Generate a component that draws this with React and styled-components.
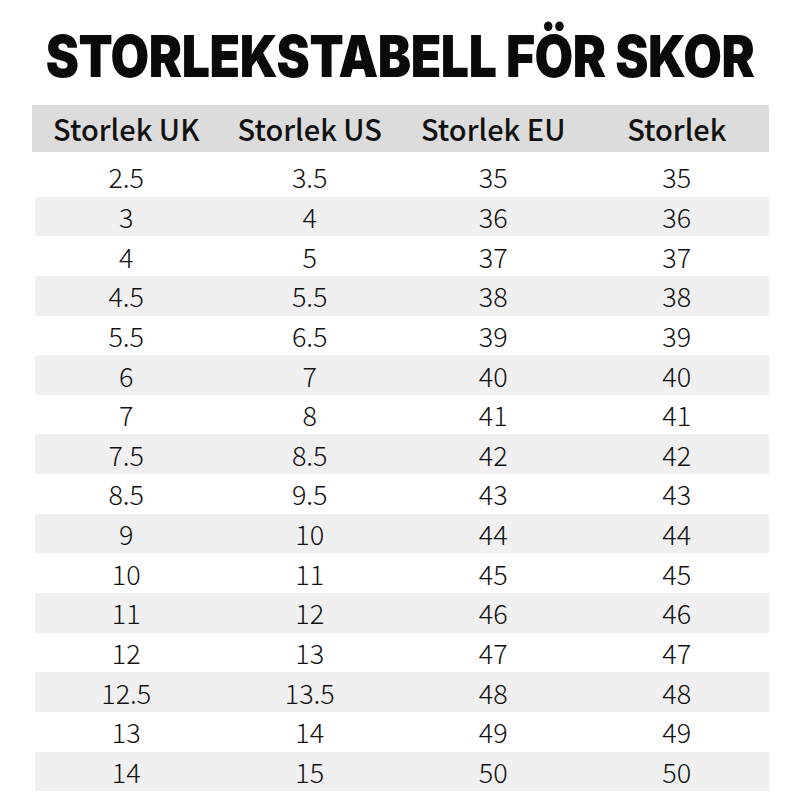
import React from "react";
import styled, { createGlobalStyle } from "styled-components";

const Global = createGlobalStyle`
  html, body { margin: 0; padding: 0; background: #ffffff; }
  body { font-family: "Noto Sans CJK SC", "Noto Sans", sans-serif; color: #111; }
`;

const Page = styled.div`
  width: 800px;
  height: 800px;
  background: #ffffff;
  display: flex;
  flex-direction: column;
  align-items: center;
  box-sizing: border-box;
  padding-top: 21px;
`;

const Title = styled.h1`
  margin: 0;
  font-family: "Inter", "Liberation Sans", sans-serif;
  font-weight: 900;
  font-size: 58px;
  line-height: 70px;
  letter-spacing: -0.5px;
  color: #0a0a0a;
  text-align: center;
  white-space: nowrap;
  transform: scaleX(0.86);
  transform-origin: center;
`;

const Table = styled.div`
  margin-top: 14px;
  width: 737px;
  display: flex;
  flex-direction: column;
`;

const HeadRow = styled.div`
  display: grid;
  grid-template-columns: repeat(4, 1fr);
  height: 47px;
  align-items: center;
  background: #dcdcdc;
  padding: 0 0 0 3px;
`;

const HeadCell = styled.div`
  text-align: center;
  font-size: 29px;
  font-weight: 500;
  color: #111;
  line-height: 1;
`;

const Body = styled.div`
  margin-top: 5px;
  display: flex;
  flex-direction: column;
  padding-left: 3px;
`;

const Row = styled.div`
  display: grid;
  grid-template-columns: repeat(4, 1fr);
  height: 39.65px;
  align-items: center;
  background: ${(p) => (p.$shaded ? "#f0f0f0" : "transparent")};
`;

const Cell = styled.div`
  text-align: center;
  font-size: 27px;
  font-weight: 300;
  color: #111;
  line-height: 1;
`;

const headers = ["Storlek UK", "Storlek US", "Storlek EU", "Storlek"];
const rows = [
  ["2.5", "3.5", "35", "35"],
  ["3", "4", "36", "36"],
  ["4", "5", "37", "37"],
  ["4.5", "5.5", "38", "38"],
  ["5.5", "6.5", "39", "39"],
  ["6", "7", "40", "40"],
  ["7", "8", "41", "41"],
  ["7.5", "8.5", "42", "42"],
  ["8.5", "9.5", "43", "43"],
  ["9", "10", "44", "44"],
  ["10", "11", "45", "45"],
  ["11", "12", "46", "46"],
  ["12", "13", "47", "47"],
  ["12.5", "13.5", "48", "48"],
  ["13", "14", "49", "49"],
  ["14", "15", "50", "50"],
];

export default function App() {
  return (
    <>
      <Global />
      <Page>
        <Title>STORLEKSTABELL FÖR SKOR</Title>
        <Table>
          <HeadRow>
            {headers.map((h) => (
              <HeadCell key={h}>{h}</HeadCell>
            ))}
          </HeadRow>
          <Body>
            {rows.map((r, i) => (
              <Row key={i} $shaded={i % 2 === 1}>
                {r.map((c, j) => (
                  <Cell key={j}>{c}</Cell>
                ))}
              </Row>
            ))}
          </Body>
        </Table>
      </Page>
    </>
  );
}
